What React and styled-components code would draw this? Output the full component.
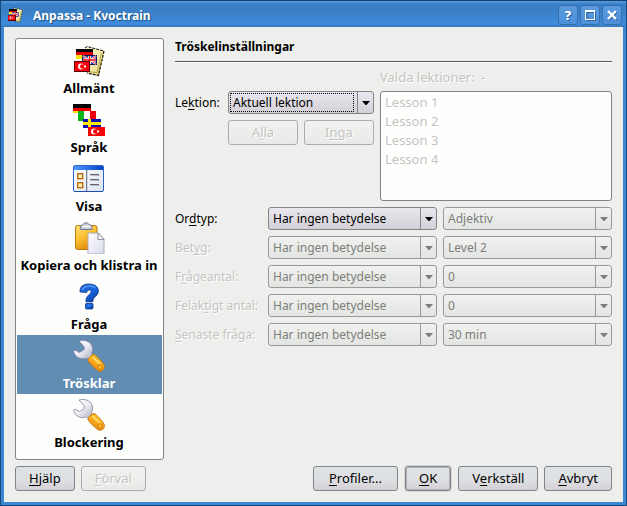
import React, { useState } from "react";
import styled, { createGlobalStyle, css } from "styled-components";

const GlobalStyle = createGlobalStyle`
  * { box-sizing: border-box; }
  body { margin: 0; background: #0d3f70; }
  body, button, select, input { font: 13px/17px "Noto Sans", "Open Sans", sans-serif; }
  u { text-decoration: underline; text-underline-offset: 2px; text-decoration-thickness: 1px; text-decoration-skip-ink: none; }
`;

const Window = styled.div`
  display: flex;
  flex-direction: column;
  min-height: 100vh;
  border: 1px solid #154a80;
  border-top-color: #12406f;
  background: #3b87d2;
  padding: 0 3px 3px;
  color: #000;
`;

const TitleBar = styled.header`
  display: flex;
  align-items: center;
  height: 26px;
  margin: 0 -3px;
  padding: 2px 4px 0 6px;
  background: linear-gradient(#5296dc 0, #5296dc 1px, #3a7fc6 3px, #3a80c6 11px, #3f8cdb 23px, #3678bd 26px);
`;

const WindowTitle = styled.h1`
  flex: 1;
  margin: 0 0 0 10px;
  font-size: 12px;
  line-height: 17px;
  font-weight: 700;
  color: #fff;
  text-shadow: 1px 1px 1px #1f4f84;
`;

const WindowControls = styled.div`
  display: flex;
  gap: 2px;
`;

const WindowButton = styled.button`
  display: grid;
  place-items: center;
  width: 20px;
  height: 20px;
  padding: 0;
  border: 1px solid #3670ae;
  border-radius: 3px;
  background: linear-gradient(#5b9ade, #4d90da);
  color: #fff;
  font-weight: 800;
  text-shadow: 1px 1px 0 #2a62a0;
`;

const Body = styled.div`
  flex: 1;
  display: flex;
  flex-direction: column;
  gap: 6px;
  padding: 11px;
  background: #eeefec;
`;

const Content = styled.div`
  flex: 1;
  display: flex;
  gap: 11px;
`;

const Sidebar = styled.nav`
  flex: none;
  width: 149px;
  padding: 1px;
  border: 1px solid #828482;
  border-radius: 3px;
  background: #fefffd;
`;

const NavItem = styled.button`
  display: flex;
  flex-direction: column;
  align-items: center;
  gap: 3px;
  width: 100%;
  height: 59px;
  padding: 5px 1px 2px 0;
  border: 0;
  background: ${(p) => (p.$selected ? "#628db2" : "transparent")};
  color: ${(p) => (p.$selected ? "#fff" : "#000")};
  font-weight: 700;
  white-space: nowrap;
`;

const Page = styled.main`
  flex: 1;
  min-width: 0;
`;

const PageTitle = styled.h2`
  margin: 0 0 8px;
  padding-bottom: 5px;
  border-bottom: 1px solid #555755;
  box-shadow: 0 1px 0 #fff;
  font-size: 12px;
  line-height: 18px;
  font-weight: 700;
`;

const disabledText = css`
  color: #c3c5c2;
  text-shadow: 1px 1px 0 #fff;
`;

const LessonArea = styled.section`
  display: grid;
  grid-template-columns: 47px 146fr 232fr;
  column-gap: 6px;
  margin-bottom: 6px;
`;

const LessonCaption = styled.label`
  grid-column: 3;
  height: 21px;
  line-height: 15px;
  white-space: pre;
  ${disabledText}
`;

const FieldLabel = styled.label`
  font-size: 12px;
  line-height: 23px;
  white-space: nowrap;
  ${(p) => p.$disabled && disabledText}
`;

const LessonPicker = styled.div`
  display: flex;
  flex-direction: column;
  gap: 6px;
`;

const ButtonPair = styled.div`
  display: grid;
  grid-template-columns: 1fr 1fr;
  gap: 6px;
`;

const LessonList = styled.select`
  width: 100%;
  height: 110px;
  padding: 1px 2px;
  border: 1px solid #828482;
  border-radius: 3px;
  outline: 0;
  background: #fefffd;
  overflow: hidden;
  opacity: 1;

  option {
    min-height: 19px;
    padding: 0 2px;
    line-height: 19px;
    color: #c3c5c2;
  }
`;

const Thresholds = styled.section`
  display: grid;
  grid-template-columns: 87px 1fr 1fr;
  gap: 6px;
`;

const ComboFrame = styled.div`
  display: grid;
  grid-template-columns: minmax(0, 1fr) 17px;
  height: 23px;
`;

const ComboSelect = styled.select`
  grid-area: 1 / 1 / 2 / 3;
  appearance: none;
  width: 100%;
  padding: 0 20px 0 4px;
  border: 1px solid #828488;
  border-radius: 3px;
  outline: 0;
  background: linear-gradient(#eae8ee, #d3d0d7);
  color: #000;
  font-size: 12px;
  opacity: 1;

  &:disabled {
    border-color: #989a97;
    background: linear-gradient(#f1f2ef, #e3e5e2);
    color: #7c7e7b;
  }
`;

const ComboArrow = styled.span`
  grid-area: 1 / 2;
  display: grid;
  place-items: center;
  border-left: 1px solid ${(p) => (p.$disabled ? "#989a97" : "#828488")};
  color: ${(p) => (p.$disabled ? "#7c7e7b" : "#000")};
  pointer-events: none;
`;

const FocusMark = styled.span`
  grid-area: 1 / 1;
  margin: 2px 3px 2px 2px;
  border: 1px dotted #000;
  pointer-events: none;
`;

const PushButton = styled.button`
  height: 25px;
  padding: 0 ${(p) => (p.$wide ? 15 : 13)}px;
  border: 1px solid #828488;
  border-radius: 3px;
  background: linear-gradient(#dde2e5, #dde0e2 55%, #d5d0d6);
  color: #000;
  white-space: nowrap;
  ${(p) => p.$default && css`
    margin: 0 1px;
    box-shadow: inset 0 0 0 1px #b0b3b5, 0 0 0 1px #d6d8d5;
  `}

  &:disabled {
    border-color: #abadaa;
    background: linear-gradient(#f1f2ef, #e8eae7);
    ${disabledText}
  }
`;

const ActionBar = styled.footer`
  display: flex;
  gap: 6px;
`;

const Spacer = styled.div`
  flex: 1;
`;

function TurkishFlag({ x, y, w = 17, h = 10 }) {
  return (
    <g>
      <rect x={x} y={y} width={w} height={h} fill="#f80008" />
      <circle cx={x + 6} cy={y + h / 2} r="3" fill="#fff" />
      <circle cx={x + 7.2} cy={y + h / 2} r="2.2" fill="#f80008" />
      <rect x={x + 9} y={y + h / 2 - 1} width="2" height="2" fill="#fff" />
    </g>
  );
}

function DeckIcon({ size = 32 }) {
  return (
    <svg width={size} height={size} viewBox="0 0 32 32" aria-hidden="true">
      <defs>
        <linearGradient id="deckPaper" x1="0" y1="0" x2="1" y2="1">
          <stop offset="0" stopColor="#fffbd0" />
          <stop offset="0.700" stopColor="#efe29a" />
          <stop offset="1" stopColor="#c2b060" />
        </linearGradient>
      </defs>
      <path d="M14 1.500 31 6 26 30.500 10 26.500z" fill="url(#deckPaper)" />
      <path d="M12 3 14 1.500 31 6" fill="none" stroke="#111" strokeDasharray="3 1" />
      <path d="M31 6 28.500 17 25.500 30.500 14 28" fill="none" stroke="#2a2408" strokeWidth="1.300" strokeDasharray="3 1" />
      <path d="M28.500 8 24 27.500 13 26.500" fill="none" stroke="#b5a24e" />
      <g shapeRendering="crispEdges">
        <rect x="3" y="4" width="17" height="3" fill="#000" />
        <rect x="3" y="7" width="17" height="4" fill="#e80000" />
        <rect x="3" y="10" width="6" height="4" fill="#ffe600" />
        <rect x="9" y="10" width="15" height="10" fill="#10185c" />
        <rect x="10" y="11" width="13" height="8" fill="#2236b4" />
      </g>
      <path d="M10 11 23 19M23 11 10 19" stroke="#fff" strokeWidth="2" />
      <path d="M10 11 23 19M23 11 10 19" stroke="#e8000a" strokeWidth="0.700" />
      <path d="M16.500 11V19M10 15H23" stroke="#fff" strokeWidth="3" />
      <path d="M16.500 11V19M10 15H23" stroke="#f0000a" strokeWidth="1.300" />
      <g shapeRendering="crispEdges">
        <rect x="1" y="16" width="16" height="11" fill="#5c0000" />
      </g>
      <TurkishFlag x={2} y={17} w={14} h={9} />
    </svg>
  );
}

function LanguagesIcon() {
  return (
    <svg width="32" height="32" viewBox="0 0 32 32" aria-hidden="true">
      <g shapeRendering="crispEdges">
        <rect x="0" y="0" width="18" height="4" fill="#000" />
        <rect x="0" y="4" width="18" height="3" fill="#f00000" />
        <rect x="0" y="7" width="6" height="2" fill="#ffe000" />
        <rect x="5" y="7" width="6" height="10" fill="#0cb314" />
        <rect x="11" y="7" width="6" height="10" fill="#fff" />
        <rect x="17" y="7" width="6" height="9" fill="#f00008" />
        <rect x="10" y="15" width="18" height="9" fill="#0a10b0" />
        <rect x="15" y="15" width="3" height="9" fill="#ffe800" />
        <rect x="10" y="18" width="18" height="3" fill="#ffe800" />
      </g>
      <TurkishFlag x={15} y={23} w={17} h={9} />
    </svg>
  );
}

function ViewIcon() {
  return (
    <svg width="32" height="32" viewBox="0 0 32 32" aria-hidden="true">
      <defs>
        <linearGradient id="viewBar"><stop stopColor="#4f98ff" /><stop offset="1" stopColor="#0844c8" /></linearGradient>
        <linearGradient id="viewPane" x2="1" y2="1"><stop stopColor="#fff" /><stop offset="1" stopColor="#dce3f4" /></linearGradient>
      </defs>
      <rect x="0.500" y="2.500" width="30" height="26" rx="1.500" fill="url(#viewPane)" stroke="#2d62c8" />
      <rect x="1" y="3" width="29" height="4" fill="url(#viewBar)" />
      <path d="M1.500 28.500H30" stroke="#1c4fae" />
      <path d="M13.500 7V28" stroke="#777f90" />
      <path d="M14.500 7V28" stroke="#cfd4e0" />
      <g fill="#fff2b8" stroke="#b86c10" strokeWidth="1.400">
        <rect x="4.700" y="10.700" width="5" height="5" />
        <rect x="4.700" y="19.700" width="5" height="5" />
      </g>
      <path d="M17 11.500H26M17 16.500H26M17 21.500H26" stroke="#666" />
      <path d="M18 12.500H27M18 17.500H27M18 22.500H27" stroke="#b9bcc4" />
    </svg>
  );
}

function PasteIcon() {
  return (
    <svg width="32" height="32" viewBox="0 0 32 32" aria-hidden="true">
      <defs>
        <linearGradient id="board" x1="0" y1="0" x2="0.500" y2="1"><stop stopColor="#ffe078" /><stop offset="0.500" stopColor="#fcc233" /><stop offset="1" stopColor="#e58a0a" /></linearGradient>
        <linearGradient id="sheet" x2="1" y2="1"><stop stopColor="#fff" /><stop offset="1" stopColor="#d8daea" /></linearGradient>
      </defs>
      <rect x="2.500" y="3.500" width="21.500" height="24" rx="2" fill="url(#board)" stroke="#b97a14" />
      <path d="M7.500 7.500C7 3 9 3 10 2.500 11 .3 15 .3 16 2.500 18.500 3 19.500 4 19 7.500z" fill="#c8ccdc" stroke="#747a90" />
      <path d="M9.500 4.500H17" stroke="#fff" strokeWidth="1.500" />
      <path d="M15 11H25.500L31 17V32H15z" fill="url(#sheet)" stroke="#aaaebf" />
      <path d="M25 11V17.500H31z" fill="#f8f9ff" stroke="#9296a8" />
    </svg>
  );
}

function HelpIcon() {
  return (
    <svg width="32" height="32" viewBox="0 0 32 32" aria-hidden="true">
      <defs>
        <linearGradient id="ask" x2="0.800" y2="1"><stop stopColor="#1c58c8" /><stop offset="0.550" stopColor="#1468e0" /><stop offset="1" stopColor="#0d3aa0" /></linearGradient>
      </defs>
      <path d="M7 11C6.500 5 11 3 16 3 22.500 3 26 6.500 25.300 11 24.800 15 21 15.500 20.200 18.500L19.800 20.800H13C12 15 18 13.500 18 10.500 18 8.300 14.500 8.500 13.500 11.500z" fill="url(#ask)" stroke="#123a90" strokeWidth="0.800" />
      <rect x="12.500" y="22.300" width="7.500" height="5.700" rx="1" fill="url(#ask)" stroke="#123a90" strokeWidth="0.800" />
      <path d="M9.500 8.500C11 5 18 4 21.500 6.500" fill="none" stroke="#5c9cf8" strokeWidth="1.500" strokeLinecap="round" />
      <path d="M14.500 24.300H17" stroke="#5c9cf8" />
    </svg>
  );
}

function WrenchIcon() {
  return (
    <svg width="32" height="32" viewBox="0 0 32 32" aria-hidden="true">
      <defs>
        <linearGradient id="steel" x2="1" y2="1"><stop stopColor="#fff" /><stop offset="0.500" stopColor="#ececf4" /><stop offset="1" stopColor="#a9aaba" /></linearGradient>
        <linearGradient id="grip" x1="1" y1="0" x2="0.300" y2="1"><stop stopColor="#ffd23c" /><stop offset="0.600" stopColor="#fba91c" /><stop offset="1" stopColor="#e07c08" /></linearGradient>
      </defs>
      <path d="M6 1C11-.5 17 1 19 6 20 9 19.500 11.500 18.500 13.500L20 15.500 15.500 19.500 13.500 18C8 19.800 2 17.500 .8 11.500L1.500 10 6.500 12.500 11.500 9.500 11 6.500z" fill="url(#steel)" stroke="#8c90a8" strokeWidth="0.900" />
      <path d="M19.500 14.500 22 14.800C26 18.500 29.500 22 31.300 25.500 32 29 29 32 25.500 31 21.500 28.500 18 24.500 15 21L15.200 18.800z" fill="url(#grip)" stroke="#c2700c" strokeWidth="0.900" />
      <path d="M20 17.500 27 24" stroke="#ffe47c" strokeWidth="1.500" strokeLinecap="round" />
      <circle cx="27" cy="27" r="2.300" fill="#ffb728" stroke="#d67a08" />
    </svg>
  );
}

const PAGES = [
  ["Allmänt", DeckIcon],
  ["Språk", LanguagesIcon],
  ["Visa", ViewIcon],
  ["Kopiera och klistra in", PasteIcon],
  ["Fråga", HelpIcon],
  ["Trösklar", WrenchIcon],
  ["Blockering", WrenchIcon],
];

const ROWS = [
  { id: "type", label: <>Or<u>d</u>typ:</>, value: "Adjektiv", enabled: true },
  { id: "grade", label: <>Bet<u>y</u>g:</>, value: "Level 2" },
  { id: "asked", label: <>F<u>r</u>ågeantal:</>, value: "0" },
  { id: "wrong", label: <>Felak<u>t</u>igt antal:</>, value: "0" },
  { id: "last", label: <><u>S</u>enaste fråga:</>, value: "30 min" },
];

function Combo({ id, value, disabled = false, focused = false, label }) {
  return (
    <ComboFrame>
      <ComboSelect id={id} disabled={disabled} aria-label={label}>
        <option>{value}</option>
      </ComboSelect>
      {focused && <FocusMark />}
      <ComboArrow $disabled={disabled}>
        <svg width="8" height="4" viewBox="0 0 8 4" aria-hidden="true">
          <path d="M0 0H8L4.500 4H3.500z" fill="currentColor" />
        </svg>
      </ComboArrow>
    </ComboFrame>
  );
}

export default function App() {
  const [page, setPage] = useState("Trösklar");
  return (
    <>
      <GlobalStyle />
      <Window>
        <TitleBar>
          <DeckIcon size={16} />
          <WindowTitle>Anpassa - Kvoctrain</WindowTitle>
          <WindowControls>
            <WindowButton aria-label="Hjälp">?</WindowButton>
            <WindowButton aria-label="Maximera">
              <svg width="11" height="11" viewBox="0 0 11 11" aria-hidden="true">
                <path d="M2 2.500H10.500V10.500H2z" fill="none" stroke="#2a62a0" />
                <path d="M0 0H10V10H0zM1 2V9H9V2z" fill="#fff" fillRule="evenodd" />
              </svg>
            </WindowButton>
            <WindowButton aria-label="Stäng">
              <svg width="11" height="11" viewBox="0 0 11 11" aria-hidden="true">
                <path d="M2 2 10 10M10 2 2 10" stroke="#2a62a0" strokeWidth="2" />
                <path d="M1 1 9 9M9 1 1 9" stroke="#fff" strokeWidth="2.400" />
              </svg>
            </WindowButton>
          </WindowControls>
        </TitleBar>
        <Body>
          <Content>
            <Sidebar aria-label="Sidor">
              {PAGES.map(([name, Icon]) => (
                <NavItem key={name} $selected={name === page} onClick={() => setPage(name)}>
                  <Icon />
                  <span>{name}</span>
                </NavItem>
              ))}
            </Sidebar>
            <Page>
              <PageTitle>Tröskelinställningar</PageTitle>
              <LessonArea>
                <LessonCaption htmlFor="lessons">{"Valda lektioner:  -"}</LessonCaption>
                <FieldLabel htmlFor="lesson">Le<u>k</u>tion:</FieldLabel>
                <LessonPicker>
                  <Combo id="lesson" value="Aktuell lektion" focused />
                  <ButtonPair>
                    <PushButton disabled>A<u>l</u>la</PushButton>
                    <PushButton disabled>I<u>n</u>ga</PushButton>
                  </ButtonPair>
                </LessonPicker>
                <LessonList id="lessons" multiple disabled size={5}>
                  {[1, 2, 3, 4].map((n) => (
                    <option key={n}>Lesson {n}</option>
                  ))}
                </LessonList>
              </LessonArea>
              <Thresholds>
                {ROWS.map((row) => (
                  <React.Fragment key={row.id}>
                    <FieldLabel htmlFor={row.id} $disabled={!row.enabled}>{row.label}</FieldLabel>
                    <Combo id={row.id} value="Har ingen betydelse" disabled={!row.enabled} />
                    <Combo id={row.id + "-value"} value={row.value} label="Värde" disabled />
                  </React.Fragment>
                ))}
              </Thresholds>
            </Page>
          </Content>
          <ActionBar>
            <PushButton><u>H</u>jälp</PushButton>
            <PushButton disabled><u>F</u>örval</PushButton>
            <Spacer />
            <PushButton $wide><u>P</u>rofiler...</PushButton>
            <PushButton $default><u>O</u>K</PushButton>
            <PushButton>V<u>e</u>rkställ</PushButton>
            <PushButton><u>A</u>vbryt</PushButton>
          </ActionBar>
        </Body>
      </Window>
    </>
  );
}
